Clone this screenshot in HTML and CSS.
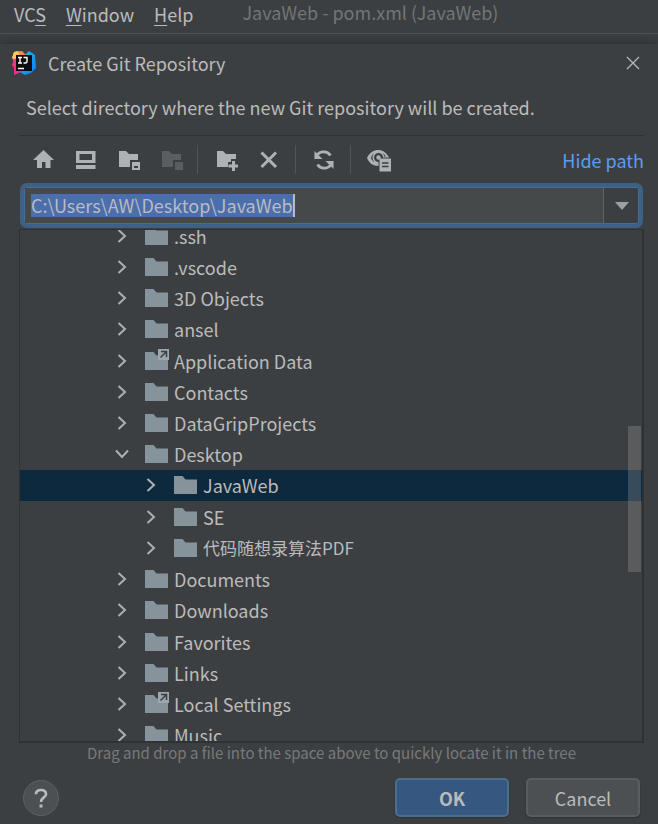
FILE: index.html
```html
<!DOCTYPE html>
<html lang="en">
<head>
<meta charset="utf-8">
<meta name="viewport" content="width=device-width, initial-scale=1">
<title>Create Git Repository</title>
<link rel="stylesheet" href="styles.css">
</head>
<body>
<svg class="defs" aria-hidden="true">
  <symbol id="folder" viewBox="0 0 23 18"><path d="M0 0H8.500L11.500 3.500H23V18H0Z"/></symbol>
  <symbol id="chevron" viewBox="0 0 14 14"><path d="M3.500 1 10 7 3.500 13" fill="none" stroke="#adb0b2" stroke-width="2"/></symbol>
  <symbol id="link" viewBox="0 0 11 11"><path d="M0 0H11V11H0Z" fill="#9ba7af"/><path d="M3 2.500H8.500V8M8.500 2.500 2.500 8.500" fill="none" stroke="#3c3f41" stroke-width="1.500"/></symbol>
</svg>
<header class="menubar">
  <nav class="menus">
    <a href="#vcs">VC<u>S</u></a>
    <a href="#window"><u>W</u>indow</a>
    <a href="#help"><u>H</u>elp</a>
  </nav>
  <span class="project">JavaWeb - pom.xml (JavaWeb)</span>
</header>
<main class="dialog">
  <div class="titlebar">
    <svg class="logo" viewBox="0 0 26 26" aria-hidden="true">
      <defs>
        <linearGradient id="warm" x1="0" y1="0" x2="0.300" y2="1"><stop offset="0" stop-color="#fcb44c"/><stop offset="0.450" stop-color="#fb6b4d"/><stop offset="0.600" stop-color="#f72d77"/><stop offset="1" stop-color="#e52ba2"/></linearGradient>
        <linearGradient id="cool" x1="0" y1="0" x2="1" y2="1"><stop offset="0" stop-color="#20d3ee"/><stop offset="0.500" stop-color="#159cf5"/><stop offset="1" stop-color="#087cfa"/></linearGradient>
      </defs>
      <path d="M14 5 18 1 24 5 25 18 20 23 14 25 9 22Z" fill="url(#cool)"/>
      <path d="M3 2 11 1 16 6 14 19 10 22 3 25 3 18 1 15 3 11 1 8Z" fill="url(#warm)"/>
      <path d="M3 2 7 1 8 5 6 10 1 8Z" fill="#ffc95f"/>
      <path d="M2 10 6 8V17L2 14Z" fill="#ff318c"/>
      <path d="M5 5H21V21H5Z" fill="#100b10"/>
      <path d="M7 7.500H11M9 7.500V13M7 13H11M12.500 7.500H16V11.500Q16 13.300 12.500 13M7 18.500H13" fill="none" stroke="#fff" stroke-width="1.400"/>
    </svg>
    <h1>Create Git Repository</h1>
    <button class="close" aria-label="Close"><svg viewBox="0 0 14 14"><path d="M1 1 13 13M13 1 1 13" stroke="#b5b7b8" stroke-width="1.300"/></svg></button>
  </div>
  <p class="message">Select directory where the new Git repository will be created.</p>
  <div class="content">
    <div class="toolbar">
      <button aria-label="Home"><svg viewBox="0 0 24 24"><path d="M11.500 2 22 12H18.500V20H13.500V14H10V20H5V12H1Z"/></svg></button>
      <button aria-label="Desktop"><svg viewBox="0 0 24 24"><path fill-rule="evenodd" d="M1 3H20.500V15H1ZM4.500 6V12H17V6ZM1 17H20.500V21H1Z"/></svg></button>
      <button aria-label="Project directory"><svg viewBox="0 0 24 24"><path fill-rule="evenodd" d="M1 3H8L11 6H20V12H12V19H1ZM14 14H22V22H14ZM16 18V20H20V18Z"/></svg></button>
      <button class="off" aria-label="Module directory" disabled><svg viewBox="0 0 24 24"><path d="M1 3H8L11 6H20V12H12V19H1ZM14 14H22V22H14Z"/></svg></button>
      <span class="rule"></span>
      <button aria-label="New folder"><svg viewBox="0 0 24 24"><path d="M3 3H9L12 6H22V11H17V14H14V19H3ZM18 13H21V16.500H24V19.500H21V23H18V19.500H14.500V16.500H18Z"/></svg></button>
      <button class="last" aria-label="Delete"><svg viewBox="0 0 24 24"><path d="M4.500 4.500 19 19M19 4.500 4.500 19" stroke="#afb1b3" stroke-width="3"/></svg></button>
      <span class="rule"></span>
      <button class="last" aria-label="Refresh"><svg viewBox="0 0 24 24"><path d="M4 10A8 8 0 0 1 18.500 7.500M20 14A8 8 0 0 1 5.500 16.500" fill="none" stroke="#afb1b3" stroke-width="2.800"/><path d="M2.500 3V11H10.500ZM21.500 21V13H13.500Z"/></svg></button>
      <span class="rule"></span>
      <button aria-label="Show hidden files"><svg class="eye" viewBox="0 0 26 24"><path fill-rule="evenodd" d="M0 10C5 -0.500 17 -0.500 22 9.500H16A4.500 4.500 0 1 0 11.500 14V18C6 18 2 15 0 10ZM4 10C5 12 6 13.500 7.500 14.200A6.500 6.500 0 0 1 7 5.300C5.500 6.500 4.500 8 4 10ZM15.500 5Q17 6.500 17.300 8.500H19Q17.500 6 15.500 5Z"/><circle cx="11.500" cy="9.500" r="2.200"/><path d="M12.500 10.500H24V23.500H12.500Z"/><path d="M15 15H21.500M15 18.500H21.500" stroke="#3c3f41" stroke-width="1.500"/></svg></button>
      <a class="hide" href="#path">Hide path</a>
    </div>
    <div class="combo">
      <div class="field"><input type="text" aria-label="Path" value="C:\Users\AW\Desktop\JavaWeb"></div>
      <button aria-label="Path history"><svg viewBox="0 0 14 8"><path d="M0 0H14L7 8Z"/></svg></button>
    </div>
    <div class="tree">
      <ul role="tree">
        <li role="treeitem"><svg class="chev"><use href="#chevron"/></svg><svg class="dir"><use href="#folder"/></svg>.ssh</li>
        <li role="treeitem"><svg class="chev"><use href="#chevron"/></svg><svg class="dir"><use href="#folder"/></svg>.vscode</li>
        <li role="treeitem"><svg class="chev"><use href="#chevron"/></svg><svg class="dir"><use href="#folder"/></svg>3D Objects</li>
        <li role="treeitem"><svg class="chev"><use href="#chevron"/></svg><svg class="dir"><use href="#folder"/></svg>ansel</li>
        <li role="treeitem"><svg class="chev"><use href="#chevron"/></svg><span class="linked"><svg class="dir"><use href="#folder"/></svg><svg class="badge"><use href="#link"/></svg></span>Application Data</li>
        <li role="treeitem"><svg class="chev"><use href="#chevron"/></svg><svg class="dir"><use href="#folder"/></svg>Contacts</li>
        <li role="treeitem"><svg class="chev"><use href="#chevron"/></svg><svg class="dir"><use href="#folder"/></svg>DataGripProjects</li>
        <li role="treeitem" aria-expanded="true"><svg class="chev open"><use href="#chevron"/></svg><svg class="dir"><use href="#folder"/></svg>Desktop</li>
        <li role="treeitem" class="child selected" aria-selected="true"><svg class="chev"><use href="#chevron"/></svg><svg class="dir"><use href="#folder"/></svg>JavaWeb</li>
        <li role="treeitem" class="child"><svg class="chev"><use href="#chevron"/></svg><svg class="dir"><use href="#folder"/></svg>SE</li>
        <li role="treeitem" class="child"><svg class="chev"><use href="#chevron"/></svg><svg class="dir"><use href="#folder"/></svg><span lang="zh-CN">代码随想录算法PDF</span></li>
        <li role="treeitem"><svg class="chev"><use href="#chevron"/></svg><svg class="dir"><use href="#folder"/></svg>Documents</li>
        <li role="treeitem"><svg class="chev"><use href="#chevron"/></svg><svg class="dir"><use href="#folder"/></svg>Downloads</li>
        <li role="treeitem"><svg class="chev"><use href="#chevron"/></svg><svg class="dir"><use href="#folder"/></svg>Favorites</li>
        <li role="treeitem"><svg class="chev"><use href="#chevron"/></svg><svg class="dir"><use href="#folder"/></svg>Links</li>
        <li role="treeitem"><svg class="chev"><use href="#chevron"/></svg><span class="linked"><svg class="dir"><use href="#folder"/></svg><svg class="badge"><use href="#link"/></svg></span>Local Settings</li>
        <li role="treeitem"><svg class="chev"><use href="#chevron"/></svg><svg class="dir"><use href="#folder"/></svg>Music</li>
      </ul>
      <span class="thumb"></span>
    </div>
    <p class="hint">Drag and drop a file into the space above to quickly locate it in the tree</p>
  </div>
  <footer class="actions">
    <button class="help" aria-label="Help"><svg viewBox="0 0 14 20"><path d="M2 6.200Q2 2 7 2T12 6.200C12 9.500 7 9.500 7 14" fill="none" stroke="#b9bbbc" stroke-width="2.700"/><path d="M5.500 16.500H8.500V19.500H5.500Z" fill="#b9bbbc"/></svg></button>
    <button class="btn primary">OK</button>
    <button class="btn">Cancel</button>
  </footer>
</main>
</body>
</html>
```
FILE: styles.css
```css
* { box-sizing: border-box; }

body {
  margin: 0;
  height: 100vh;
  display: flex;
  flex-direction: column;
  background: #3c3f41;
  color: #bbbbbb;
  font: 18px/24px "Noto Sans CJK SC", "Noto Sans", sans-serif;
}

button, input { font: inherit; color: inherit; }
button { margin: 0; padding: 0; border: 0; background: none; }
a { color: inherit; text-decoration: none; }
svg { display: block; flex: none; }
.defs { position: absolute; width: 0; height: 0; }

.menubar {
  display: flex;
  height: 34px;
  padding-left: 14px;
  border-bottom: 1px solid #515456;
}
.menus { display: flex; gap: 20px; padding-top: 2px; }
.menus u { text-underline-offset: 3px; }
.project { margin-left: 49px; color: #737576; }

.dialog {
  flex: 1;
  min-height: 0;
  display: flex;
  flex-direction: column;
  margin-top: 10px;
  box-shadow: 0 0 12px rgba(0, 0, 0, 0.3);
  background: #3c3f41;
}
.titlebar { display: flex; align-items: center; height: 38px; padding: 0 18px 0 11px; }
.logo { width: 26px; height: 26px; }
h1 { flex: 1; margin: 0 0 0 11px; font-size: 18px; font-weight: 400; }
.close svg { width: 14px; height: 14px; }
.message { margin: 0; padding: 13px 26px 16px; }

.content { flex: 1; min-height: 0; display: flex; flex-direction: column; margin: 0 14px 0 19px; }
.toolbar { display: flex; align-items: center; height: 48px; border-top: 1px solid #2f3133; padding-left: 13px; }
.toolbar button { margin-right: 19px; fill: #afb1b3; }
.toolbar .off { fill: #5b5d5e; margin-right: 12px; }
.toolbar .last { margin-right: 14px; }
.toolbar svg { width: 24px; height: 24px; }
.toolbar .eye { width: 26px; }
.rule { width: 1px; height: 29px; margin-right: 16px; background: #515456; }
.hide { margin-left: auto; color: #589df6; }

.combo {
  display: flex;
  height: 45px;
  margin: 0 1px;
  border: 4px solid #3d6185;
  border-radius: 7px;
  box-shadow: inset 0 0 0 1px #466d94;
}
.field { flex: 1; display: flex; align-items: center; margin: 1px 0 1px 1px; padding-left: 6px; background: #45494a; }
.field input {
  field-sizing: content;
  height: 23px;
  padding: 0 0 2px;
  border: 0;
  border-right: 2px solid #bbbbbb;
  outline: 0;
  background: #4b6eaf;
}
.combo button { display: flex; align-items: center; justify-content: center; width: 36px; border-left: 1px solid #646464; }
.combo button svg { width: 14px; height: 8px; fill: #9da0a2; }

.tree { flex: 1; min-height: 0; position: relative; overflow: hidden; border: 1px solid #2f3133; border-width: 1px 2px 2px 1px; margin-top: 1px; }
ul { display: flex; flex-direction: column; height: 531px; margin: -10px 0 0; padding: 0; list-style: none; }
li { flex: 1; display: flex; align-items: center; padding-left: 95px; }
li span { font-size: 17px; }
.child { padding-left: 124px; }
.selected { background: #0d293e; }
.chev { width: 14px; height: 14px; margin-right: 16px; }
.open { transform: rotate(90deg); }
.dir { width: 23px; height: 18px; margin-right: 6px; fill: #87939a; }
.linked { position: relative; }
.badge { position: absolute; top: -3px; right: 5px; width: 11px; height: 11px; }
.thumb { position: absolute; top: 196px; right: 1px; width: 13px; height: 146px; background: rgba(166, 166, 166, 0.28); }
.hint { margin: 0; font-size: 15px; line-height: 20px; text-align: center; color: #777a7b; }

.actions { display: flex; align-items: center; gap: 17px; padding: 15px 18px 7px 23px; }
.help { display: flex; align-items: center; justify-content: center; width: 36px; height: 36px; margin-right: auto; border: 1px solid #5e6060; border-radius: 50%; background: #4c5052; }
.help svg { width: 14px; height: 20px; }
.btn { width: 114px; height: 39px; border: 2px solid #5a5d5e; border-radius: 5px; background: #4c5052; box-shadow: 0 1px 2px rgba(0, 0, 0, 0.25); }
.primary { border-color: #4c708c; background: #365880; font-weight: 700; }
```
